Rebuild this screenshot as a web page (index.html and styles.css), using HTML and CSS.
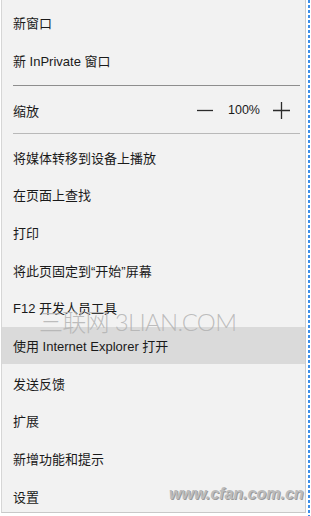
FILE: index.html
```html
<!DOCTYPE html>
<html lang="zh-CN">
<head>
<meta charset="utf-8">
<title>Menu</title>
<link rel="stylesheet" href="styles.css">
</head>
<body>
<div class="frame">
  <div class="menu">
    <div class="item first">新窗口</div>
    <div class="item">新 InPrivate 窗口</div>
    <div class="sep sep1"></div>
    <div class="item zoom">
      <span>缩放</span>
      <span class="zoom-ctrl">
        <svg class="minus" width="16" height="16" viewBox="0 0 16 16"><path d="M0 8.5H16" stroke="#2b2b2b" stroke-width="1.3"/></svg>
        <span class="pct">100%</span>
        <svg class="plus" width="17" height="17" viewBox="0 0 17 17"><path d="M0 8.5H17M8.5 0V17" stroke="#2b2b2b" stroke-width="1.3"/></svg>
      </span>
    </div>
    <div class="sep sep2"></div>
    <div class="item">将媒体转移到设备上播放</div>
    <div class="item">在页面上查找</div>
    <div class="item">打印</div>
    <div class="item">将此页固定到“开始”屏幕</div>
    <div class="item">F12 开发人员工具</div>
    <div class="item hl">使用 Internet Explorer 打开</div>
    <div class="item">发送反馈</div>
    <div class="item">扩展</div>
    <div class="item">新增功能和提示</div>
    <div class="item">设置</div>
    <div class="wm1">三联网 3LIAN.COM</div>
    <div class="wm2">www.cfan.com.cn</div>
  </div>
  <div class="dash"></div>
</div>
</body>
</html>
```

FILE: styles.css
```css
html, body {
  margin: 0;
  padding: 0;
  background: #ffffff;
}
body {
  width: 311px;
  height: 516px;
  overflow: hidden;
  font-family: "Liberation Sans", "Noto Sans CJK SC", sans-serif;
  font-size: 13px;
  color: #1a1a1a;
}
.frame {
  display: flex;
  align-items: flex-start;
  gap: 2px;
  height: 516px;
}
.menu {
  position: relative;
  box-sizing: border-box;
  width: 305px;
  height: 513px;
  margin-left: 1px;
  padding-top: 3.6px;
  background: #f2f2f2;
  border-left: 1px solid #d6d6d6;
  border-right: 1px solid #cdcdcd;
  border-bottom: 1px solid #c8c8c8;
  overflow: hidden;
}
.item {
  height: 37.67px;
  display: flex;
  align-items: center;
  padding-left: 11px;
  padding-right: 15px;
  white-space: nowrap;
}
.item.hl {
  background: #dadada;
}
.sep {
  height: 1px;
  margin-left: 11px;
  margin-right: 5px;
}
.sep1 {
  background: #8e8e8e;
  margin-top: 6.2px;
  margin-bottom: 5.2px;
}
.sep2 {
  background: #b9b9b9;
  margin-top: 4.2px;
  margin-bottom: 4.2px;
}
.zoom {
  justify-content: space-between;
}
.zoom-ctrl {
  display: flex;
  align-items: center;
}
.minus {
  display: block;
}
.pct {
  width: 31px;
  margin: 0 14px 0 15px;
  text-align: center;
  font-size: 12.5px;
}
.plus {
  display: block;
}
.wm1 {
  position: absolute;
  left: 37px;
  top: 308px;
  font-family: "Lato", "Noto Sans CJK SC", sans-serif;
  font-weight: 300;
  font-size: 24px;
  line-height: 28px;
  letter-spacing: -0.7px;
  color: rgba(178, 178, 178, 0.85);
  white-space: nowrap;
}
.wm2 {
  position: absolute;
  left: 167px;
  top: 485px;
  font-family: "Liberation Sans", sans-serif;
  font-weight: bold;
  font-style: italic;
  font-size: 16px;
  line-height: 18px;
  color: #bcbcbc;
  text-shadow: 1px 1px 0 #9c9c9c;
  white-space: nowrap;
}
.dash {
  width: 2px;
  height: 516px;
  background: repeating-linear-gradient(to bottom, #3d8fe8 0, #3d8fe8 3px, transparent 3px, transparent 5px);
}
```
